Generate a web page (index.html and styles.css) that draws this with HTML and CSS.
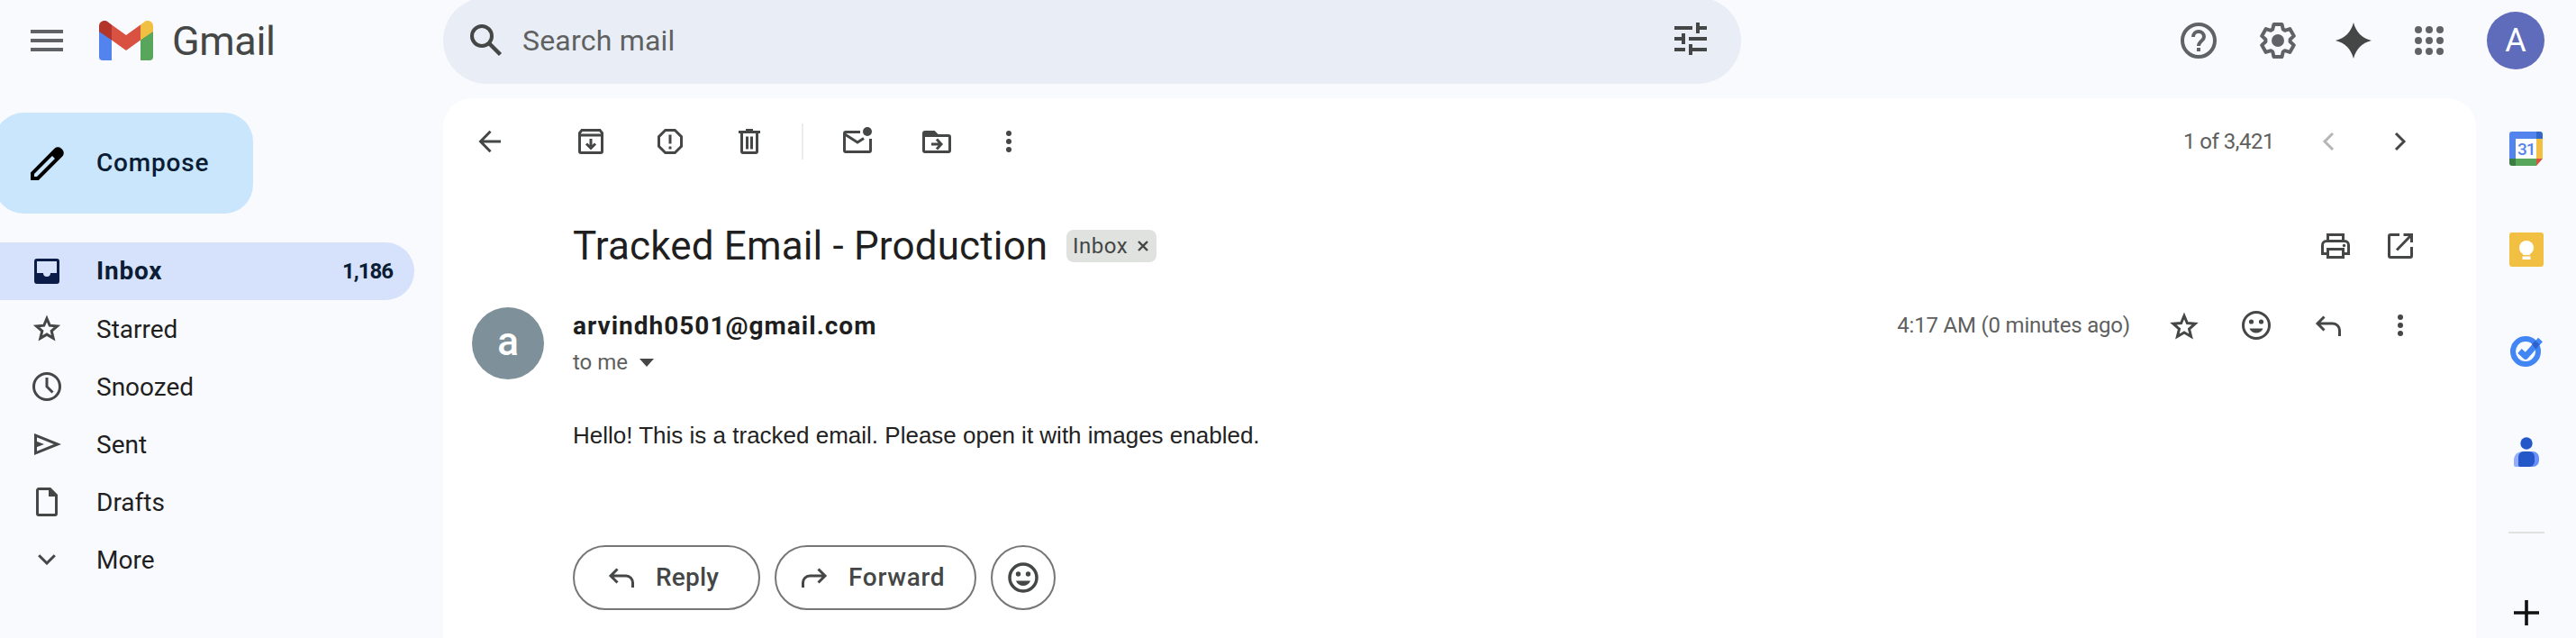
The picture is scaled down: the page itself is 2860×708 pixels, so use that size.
FILE: index.html
```html
<!DOCTYPE html>
<html lang="en">
<head>
<meta charset="utf-8">
<title>Gmail</title>
<link rel="stylesheet" href="styles.css">
</head>
<body>
<div class="app">
  <aside class="left">
    <div class="brand">
      <svg class="menu" width="36" height="24" viewBox="0 0 36 24"><path fill="#5f6368" d="M0 0h36v4H0zM0 10h36v4H0zM0 20h36v4H0z"/></svg>
      <svg class="logo" width="60" height="44" viewBox="0 0 60 44">
        <path fill="#5383ec" d="M0 11l14 9v24H4a4 4 0 0 1-4-4z"/>
        <path fill="#58a55c" d="M60 11l-14 9v24h10a4 4 0 0 0 4-4z"/>
        <path fill="#d95140" d="M14 4.500L30 16 46 4.500V21.500L30 33 14 21.500z"/>
        <path fill="#b33428" d="M0 12V6C0 .8 6-1.700 10 1.500l4 3v17z"/>
        <path fill="#f1bf42" d="M60 12V6c0-5.200-6-7.700-10-4.500l-4 3v17z"/>
      </svg>
      <span class="t brand-name">Gmail</span>
    </div>
    <button class="compose">
      <svg width="37" height="37" viewBox="0 0 37 37"><path fill="#000" fill-rule="evenodd" d="M0 28.500L26.500 1.800a5.500 5.500 0 0 1 7.500 0l1.300 1.300a5.500 5.500 0 0 1 0 7.500L8.800 37H0zM4 30v3h3l20-20-3-3z"/></svg>
      <span class="t">Compose</span>
    </button>
    <nav class="nav">
      <a class="row active"><span class="ic"><svg width="28" height="28" viewBox="0 0 28 28"><path fill="#0a1c47" fill-rule="evenodd" d="M3 0h22a3 3 0 0 1 3 3v22a3 3 0 0 1-3 3H3a3 3 0 0 1-3-3V3a3 3 0 0 1 3-3zm0 3v13h7a4 4 0 0 0 8 0h7V3z"/></svg></span><span class="t inbox-label">Inbox</span><span class="t count">1,186</span></a>
      <a class="row"><span class="ic"><svg width="32" height="32" viewBox="0 0 32 32"><path class="s3" d="M16 4.500l3.200 7.700 8.300.7-6.300 5.400 2 8.100-7.200-4.300-7.200 4.300 2-8.100-6.300-5.400 8.300-.7z"/></svg></span><span class="t">Starred</span></a>
      <a class="row"><span class="ic"><svg width="32" height="32" viewBox="0 0 32 32"><circle class="s3" cx="16" cy="16" r="14.500"/><path class="s3" d="M16 6v10l6.500 6.500"/></svg></span><span class="t">Snoozed</span></a>
      <a class="row"><span class="ic"><svg width="32" height="24" viewBox="0 0 32 24"><path class="s3" d="M3.500 2.200L28 12 3.500 21.800z"/><path fill="#444746" d="M4 8.500L13 12l-9 3.500z"/></svg></span><span class="t">Sent</span></a>
      <a class="row"><span class="ic"><svg width="24" height="32" viewBox="0 0 24 32"><path class="s3" d="M3 1.500h12.500l7 7V29a1.500 1.500 0 0 1-1.500 1.500H3A1.500 1.500 0 0 1 1.500 29V3A1.500 1.500 0 0 1 3 1.500z"/><path fill="#444746" d="M14 1h2.500l7 7v2H14z"/></svg></span><span class="t">Drafts</span></a>
      <a class="row"><span class="ic"><svg width="20" height="12" viewBox="0 0 20 12"><path class="s3" d="M1.200 1.200L10 10l8.800-8.800"/></svg></span><span class="t">More</span></a>
    </nav>
  </aside>

  <div class="center">
    <div class="search">
      <svg width="36" height="36" viewBox="0 0 36 36"><circle cx="13" cy="13" r="11" fill="none" stroke="#444746" stroke-width="4"/><path d="M20.500 20.500L33.500 33.500" stroke="#444746" stroke-width="4.500"/></svg>
      <span class="t search-text">Search mail</span>
      <svg class="tune" width="36" height="36" viewBox="0 0 36 36"><path fill="#444746" d="M0 4h20v4H0zM24 0h4v4h8v4h-8v4h-4zM0 16h8v-4h4v12H8v-4H0zM16 16h20v4H16zM0 28h12v4H0zM16 24h4v4h16v4H20v4h-4z"/></svg>
    </div>
    <main class="panel">
      <div class="toolbar">
        <svg class="i" viewBox="0 0 40 40"><path class="s3" d="M32 20H10M20.500 8.800L9.500 20l11 11.200"/></svg>
        <svg class="i archive" viewBox="0 0 40 40"><path class="s3" d="M10 7.500h20l2.500 3V31a1.500 1.500 0 0 1-1.500 1.500H9A1.500 1.500 0 0 1 7.500 31V10.500zM7.500 13h25M20 17v10M15 22.500l5 5 5-5"/></svg>
        <svg class="i" viewBox="0 0 40 40"><path class="s3" d="M14.700 7.500h10.600l7.200 7.200v10.600l-7.200 7.200H14.700l-7.200-7.200V14.700zM20 12.500v10M20 25.500v3"/></svg>
        <svg class="i" viewBox="0 0 40 40"><path class="s3" d="M8 9.500h24M16 7.500h8M11.500 10v21a1.500 1.500 0 0 0 1.500 1.500h14a1.500 1.500 0 0 0 1.500-1.500V10M17.500 14.500v14M22.500 14.500v14"/></svg>
        <span class="vline"></span>
        <svg class="i" viewBox="0 0 40 40"><path class="s3" d="M23 9.500H7A1.500 1.500 0 0 0 5.500 11v19A1.500 1.500 0 0 0 7 31.500h26a1.500 1.500 0 0 0 1.500-1.500V17M6 12l14 9 7-4.500"/><circle cx="31" cy="9" r="5" fill="#444746"/></svg>
        <svg class="i" viewBox="0 0 40 40"><path class="s3" d="M7 9.500h10l4 4h12a1.500 1.500 0 0 1 1.500 1.500v15a1.500 1.500 0 0 1-1.500 1.500H7A1.500 1.500 0 0 1 5.500 30V11A1.500 1.500 0 0 1 7 9.500zM14 23h10M20 17.500l5 5.500-5 5.500"/><path fill="#444746" d="M5 9h12l5 6H5z"/></svg>
        <svg class="i dots" viewBox="0 0 40 40"><circle cx="20" cy="11" r="3"/><circle cx="20" cy="20" r="3"/><circle cx="20" cy="29" r="3"/></svg>
        <div class="pager"><span class="t pos">1 of 3,421</span>
          <svg class="i" viewBox="0 0 40 40"><path class="s3 pale" d="M25 11l-9 9 9 9"/></svg>
          <svg class="i next" viewBox="0 0 40 40"><path class="s3" d="M15 11l9 9-9 9"/></svg>
        </div>
      </div>
      <div class="subject">
        <h1 class="t">Tracked Email - Production</h1>
        <span class="chip"><span class="t">Inbox</span><svg width="12" height="12" viewBox="0 0 12 12"><path d="M1 1l10 10M11 1L1 11" stroke="#444746" stroke-width="2.400"/></svg></span>
        <div class="acts">
          <svg class="i" viewBox="0 0 40 40"><path class="s3" d="M11.500 14.500v-7h17v7M11 28.500H5.500V19A4.500 4.500 0 0 1 10 14.500h20a4.500 4.500 0 0 1 4.500 4.500v9.500H29M11.500 23.500h17v9h-17z"/><circle cx="29.500" cy="19.500" r="1.700" fill="#444746"/></svg>
          <svg class="i" viewBox="0 0 40 40"><path class="s3" d="M19 7.500H9A1.500 1.500 0 0 0 7.500 9v22A1.500 1.500 0 0 0 9 32.500h22a1.500 1.500 0 0 0 1.500-1.500V21M23.500 7.500h9V16M31.500 8.500L16 24.500"/></svg>
        </div>
      </div>
      <div class="message">
        <div class="avatar"><span>a</span></div>
        <div class="content">
          <div class="meta">
            <span class="t sender">arvindh0501@gmail.com</span>
            <div class="acts2">
              <span class="t time">4:17 AM (0 minutes ago)</span>
              <svg class="i" viewBox="0 0 40 40"><path class="s3" d="M20 9.500l3.400 8.100 8.700.7-6.600 5.700 2.100 8.500-7.600-4.500-7.600 4.500 2.100-8.500-6.600-5.700 8.700-.7z"/></svg>
              <svg class="i" viewBox="0 0 40 40"><circle class="s3" cx="20" cy="20" r="14.500"/><g fill="#444746"><circle cx="14.500" cy="16" r="2.600"/><circle cx="25.500" cy="16" r="2.600"/><path d="M12.500 23.500h15c-1.300 3.200-4.200 5-7.500 5s-6.200-1.800-7.500-5z"/></g></svg>
              <svg class="i" viewBox="0 0 40 40"><path class="s3" d="M15.500 10.500L8 18l7.500 7.500M8 18h17a7.500 7.500 0 0 1 7.500 7.500V32"/></svg>
              <svg class="i dots" viewBox="0 0 40 40"><circle cx="20" cy="11" r="3"/><circle cx="20" cy="20" r="3"/><circle cx="20" cy="29" r="3"/></svg>
            </div>
          </div>
          <div class="to"><span class="t">to me</span><span class="caret"></span></div>
          <p class="t body-text">Hello! This is a tracked email. Please open it with images enabled.</p>
          <div class="buttons">
            <button class="pill reply"><svg class="i" viewBox="0 0 40 40"><path class="s3" d="M15.500 10.500L8 18l7.500 7.500M8 18h17a7.500 7.500 0 0 1 7.500 7.500V31"/></svg><span class="t">Reply</span></button>
            <button class="pill forward"><svg class="i" viewBox="0 0 40 40"><path class="s3" d="M24.500 10.500L32 18l-7.500 7.500M32 18H15a7.500 7.500 0 0 0-7.500 7.500V31"/></svg><span class="t">Forward</span></button>
            <button class="pill emoji"><svg class="i" viewBox="0 0 40 40"><circle cx="20" cy="20" r="15" fill="none" stroke="#444746" stroke-width="3.500"/><g fill="#444746"><circle cx="14.500" cy="16" r="2.700"/><circle cx="25.500" cy="16" r="2.700"/><path d="M12 23.500h16c-1.300 3.600-4.400 5.500-8 5.500s-6.700-1.900-8-5.500z"/></g></svg></button>
          </div>
        </div>
      </div>
    </main>
  </div>

  <div class="tools">
    <svg width="48" height="48" viewBox="0 0 48 48"><circle cx="24" cy="24" r="18" fill="none" stroke="#5f6368" stroke-width="4"/><path d="M18 20a6 6 0 1 1 12 0c0 4-6 5-6 10" fill="none" stroke="#5f6368" stroke-width="4"/><path fill="#5f6368" d="M22 32h4v4h-4z"/></svg>
    <svg class="gear" width="48" height="48" viewBox="-24 -24 48 48"><path fill="none" stroke="#5f6368" stroke-width="4" stroke-linejoin="round" d="M-5.800-12.400L-4.500-18H4.500L5.800-12.400 7.800-11.200 13.300-12.900 17.800-5.100 13.600-1.200V1.200L17.800 5.100 13.300 12.900 7.800 11.200 5.800 12.400 4.500 18H-4.500L-5.800 12.400-7.800 11.200-13.300 12.900-17.800 5.100-13.600 1.200V-1.200L-17.800-5.100-13.300-12.900-7.800-11.200z"/><circle r="7" fill="#5f6368"/></svg>
    <svg class="spark" width="40" height="40" viewBox="0 0 40 40"><path fill="#444746" d="M20 0c3 11 9 17 20 20-11 3-17 9-20 20C17 29 11 23 0 20 11 17 17 11 20 0z"/></svg>
    <svg class="apps" width="32" height="32" viewBox="0 0 32 32"><g fill="#5f6368"><circle cx="4" cy="4" r="4"/><circle cx="16" cy="4" r="4"/><circle cx="28" cy="4" r="4"/><circle cx="4" cy="16" r="4"/><circle cx="16" cy="16" r="4"/><circle cx="28" cy="16" r="4"/><circle cx="4" cy="28" r="4"/><circle cx="16" cy="28" r="4"/><circle cx="28" cy="28" r="4"/></g></svg>
    <span class="user"><span>A</span></span>
  </div>

  <aside class="side">
    <svg class="cal" width="38" height="38" viewBox="0 0 38 38"><path fill="#fff" d="M7 7h23v24H7z"/><path fill="#5383ec" d="M3 0h27v8H7v22H0V3a3 3 0 0 1 3-3z"/><path fill="#3367c8" d="M30 0h4a3 3 0 0 1 3 3v5h-7z"/><path fill="#f1bf42" d="M30 8h7v22h-7z"/><path fill="#58a55c" d="M7 30h23v8H7z"/><path fill="#3b7d42" d="M0 30h7v8H3a3 3 0 0 1-3-3z"/><path fill="#d95140" d="M30 30h7l-7 8z"/><text class="cal-day" x="18.700" y="25.500">31</text></svg>
    <svg class="keep" width="38" height="38" viewBox="0 0 38 38"><rect width="38" height="38" rx="3" fill="#f1bf42"/><g fill="#fff"><circle cx="19" cy="17" r="8"/><path d="M15 22h8v2.700h-8zM14.500 26.500h9v3.500h-9z"/></g></svg>
    <svg class="tasks" width="38" height="36" viewBox="0 0 38 36"><circle cx="18" cy="19" r="14" fill="none" stroke="#4285f4" stroke-width="6"/><path d="M11.500 18.500l6.500 6L34.500 6" fill="none" stroke="#4285f4" stroke-width="6.500" stroke-linejoin="round"/><path fill="#2b62cf" d="M25 11l4-4 4.500 4.500-4 5z"/></svg>
    <svg class="contacts" width="28" height="33" viewBox="0 0 28 33"><path fill="#91adfb" d="M10 16h5v17H2a2 2 0 0 1-2-2v-5c0-6 4-10 10-10z"/><path fill="#6a90fb" d="M15 16h6a7 7 0 0 1 7 7v3a7 7 0 0 1-7 7h-6z"/><path fill="#2457c8" d="M11 16h6a6 6 0 0 1 6 6v5a6 6 0 0 1-6 6H7a2 2 0 0 1-2-2v-9a6 6 0 0 1 6-6z"/><circle cx="14" cy="7" r="6.700" fill="#2457c8"/></svg>
    <span class="hline"></span>
    <svg class="plus" width="28" height="28" viewBox="0 0 28 28"><path d="M14 0v28M0 14h28" stroke="#111" stroke-width="3.600"/></svg>
  </aside>
</div>
</body>
</html>
```

FILE: styles.css
```css
* { box-sizing: border-box; }
body {
  margin: 0;
  background: #f9fafe;
  font-family: Roboto, "Liberation Sans", sans-serif;
  color: #1f1f1f;
}
.app {
  width: 2860px;
  height: 708px;
  overflow: hidden;
  display: grid;
  grid-template-columns: 492px 2257px 111px;
  grid-template-rows: 708px;
}
svg { display: block; flex: none; }
.t { white-space: nowrap; }
button { font: inherit; border: 0; background: none; padding: 0; display: flex; align-items: center; }
.s3 { fill: none; stroke: #444746; stroke-width: 3; }
.pale { stroke: #b4b5b5; }
.i { width: 40px; height: 40px; }
.dots { fill: #444746; }

/* Left column */
.left { grid-column: 1; grid-row: 1; }
.brand { height: 90px; display: flex; align-items: center; padding-left: 34px; }
.logo { margin-left: 40px; }
.brand-name { margin-left: 21px; font-size: 45px; line-height: 52px; color: #444746; letter-spacing: -.4px; padding-top: 1px; }
.compose {
  width: 287px; height: 112px; margin: 35px 0 32px -6px; padding-left: 40px;
  border-radius: 32px; background: #cae6fc; color: #0a1d35;
  font-size: 28px; font-weight: 500;
}
.compose .t { margin-left: 36px; padding-bottom: 2px; letter-spacing: .8px; }
.row {
  height: 64px; width: 460px; display: flex; align-items: center;
  padding: 0 24px 0 28px; font-size: 28px; color: #1f1f1f;
}
.ic { width: 48px; display: flex; justify-content: center; margin-right: 31px; }
.active { background: #d6e1fb; border-radius: 0 32px 32px 0; color: #0a1d35; font-weight: 700; }
.inbox-label { letter-spacing: .8px; padding-bottom: 2px; }
.count { margin-left: auto; font-size: 24px; letter-spacing: -1px; }

/* Search and reading pane */
.center { grid-column: 2; grid-row: 1; display: flex; flex-direction: column; }
.search {
  width: 1441px; height: 96px; margin-top: -3px; margin-bottom: 16px; flex: none;
  border-radius: 48px; background: #e9eef6;
  display: flex; align-items: center; padding: 0 38px 0 30px;
}
.search-text { margin-left: 22px; font-size: 32px; letter-spacing: .2px; color: #5f6060; }
.tune { margin-left: auto; margin-bottom: 4px; }
.panel { flex: 1; background: #fff; border-radius: 32px 32px 0 0; }
.toolbar { height: 96px; display: flex; align-items: center; padding: 0 64px 0 32px; gap: 48px; }
.archive { margin-left: 24px; }
.vline { width: 2px; height: 40px; margin: 0 -10px; background: #ebebeb; }
.toolbar .vline + .i { margin-left: 2px; }
.toolbar > .dots { margin-left: -8px; }
.pager { margin-left: auto; display: flex; align-items: center; gap: 40px; font-size: 24px; color: #5e5f5e; }
.pos { letter-spacing: -.5px; }
.subject { height: 136px; display: flex; align-items: center; padding: 0 64px 0 144px; }
.subject h1 { margin: 0; width: 528px; font-size: 44px; line-height: 56px; font-weight: 400; letter-spacing: .15px; }
.chip {
  height: 36px; width: 100px; margin-left: 20px; padding: 0 9px 0 7px; border-radius: 8px; background: #e0e2df;
  display: flex; align-items: center; justify-content: space-between; font-size: 24px; letter-spacing: .5px; color: #444746;
}
.acts { margin-left: auto; display: flex; gap: 32px; }
.message { display: flex; padding: 0 64px 0 32px; }
.avatar {
  width: 80px; height: 80px; flex: none; border-radius: 50%; background: #7e909a; color: #fff;
  display: flex; align-items: center; justify-content: center; font-size: 44px; font-weight: 500;
}
.avatar span { margin-top: -4px; }
.content { flex: 1; margin-left: 32px; }
.meta { display: flex; align-items: center; justify-content: space-between; height: 40px; }
.sender { font-size: 28px; font-weight: 700; letter-spacing: 1px; }
.acts2 { display: flex; align-items: center; gap: 40px; }
.time { font-size: 24px; letter-spacing: -.2px; color: #5e5f5e; }
.to { display: flex; align-items: center; height: 42px; font-size: 24px; color: #5e5f5e; }
.caret { margin-left: 13px; border: 8px solid transparent; border-top: 9px solid #444746; border-bottom: 0; }
.body-text { margin: 44px 0 0; font: 26px/32px "Liberation Sans", sans-serif; color: #222; }
.buttons { display: flex; gap: 16px; margin-top: 106px; }
.pill { height: 72px; border: 2px solid #747775; border-radius: 36px; color: #444746; font-size: 28px; font-weight: 500; }
.reply { width: 208px; padding-left: 32px; }
.forward { width: 224px; padding-left: 22px; }
.pill .t { margin-left: 18px; padding-bottom: 1px; }
.forward .t { letter-spacing: .7px; }
.reply .t { letter-spacing: .2px; }
.emoji { width: 72px; justify-content: center; }

/* Account tools */
.tools { grid-column: 2 / 4; grid-row: 1; justify-self: end; align-self: start; height: 90px; display: flex; align-items: center; padding-right: 35px; }
.gear { margin-left: 40px; }
.spark { margin-left: 40px; }
.apps { margin-left: 48px; }
.user {
  width: 64px; height: 64px; margin-left: 48px; border-radius: 50%; background: #5f6bbb; color: #fff;
  display: flex; align-items: center; justify-content: center; font-size: 36px;
}

/* Side panel */
.side { grid-column: 3; grid-row: 1; display: flex; flex-direction: column; align-items: center; padding-top: 146px; }
.cal-day { font: 500 19px Roboto, sans-serif; fill: #5383ec; text-anchor: middle; letter-spacing: -1px; }
.keep { margin-top: 74px; }
.tasks { margin-top: 75px; }
.contacts { margin-top: 78px; }
.hline { width: 40px; height: 2px; margin-top: 72px; background: #e0e2e0; }
.plus { margin-top: 74px; }
```
